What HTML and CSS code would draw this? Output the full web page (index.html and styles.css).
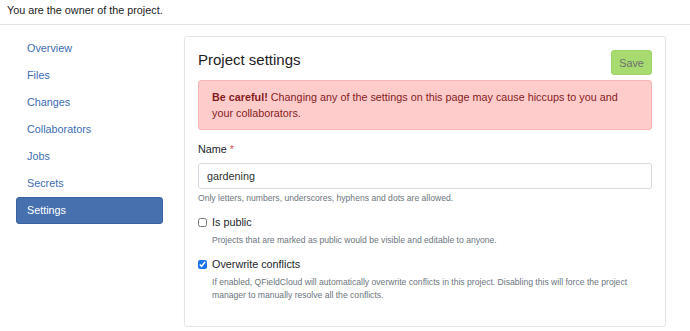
FILE: index.html
```html
<!DOCTYPE html>
<html lang="en">
<head>
    <meta charset="UTF-8">
    <meta name="viewport" content="width=device-width, initial-scale=1.0">
    <title>Project settings</title>
    <link rel="stylesheet" href="styles.css">
</head>
<body>

    <p class="owner-note">You are the owner of the project.</p>

    <div class="layout">
        <!-- Project sections -->
        <nav class="side-nav">
            <a class="nav-link" href="#">Overview</a>
            <a class="nav-link" href="#">Files</a>
            <a class="nav-link" href="#">Changes</a>
            <a class="nav-link" href="#">Collaborators</a>
            <a class="nav-link" href="#">Jobs</a>
            <a class="nav-link" href="#">Secrets</a>
            <a class="nav-link active" href="#">Settings</a>
        </nav>

        <main class="card">
            <div class="card-head">
                <h1>Project settings</h1>
                <button class="btn-save" disabled>Save</button>
            </div>

            <div class="alert">
                <strong>Be careful!</strong> Changing any of the settings on this page may cause hiccups to you and your collaborators.
            </div>

            <div class="field">
                <label class="field-label" for="name">Name <span class="required">*</span></label>
                <input class="text-input" id="name" type="text" value="gardening">
                <div class="help">Only letters, numbers, underscores, hyphens and dots are allowed.</div>
            </div>

            <div class="check">
                <label class="check-row"><input type="checkbox"> Is public</label>
                <div class="help check-help">Projects that are marked as public would be visible and editable to anyone.</div>
            </div>

            <div class="check">
                <label class="check-row"><input type="checkbox" checked> Overwrite conflicts</label>
                <div class="help check-help">If enabled, QFieldCloud will automatically overwrite conflicts in this project. Disabling this will force the project manager to manually resolve all the conflicts.</div>
            </div>
        </main>
    </div>

</body>
</html>
```

FILE: styles.css
```css
body {
    margin: 0;
    font-family: "Liberation Sans", Arial, sans-serif;
    font-size: 10.8px;
    color: #212529;
    background-color: #fff;
}

.owner-note {
    margin: 0;
    padding: 0 7px;
    height: 24px;
    line-height: 20px;
    color: #222;
    border-bottom: 1px solid #e3e3e3;
}

.layout {
    display: flex;
    align-items: flex-start;
    gap: 21px;
    padding: 10px 24px 0 16px;
}

.side-nav {
    display: flex;
    flex-direction: column;
    width: 147px;
    flex-shrink: 0;
}

.nav-link {
    display: block;
    height: 27px;
    line-height: 27px;
    padding: 0 11px;
    color: #3d6db3;
    text-decoration: none;
    border-radius: 3px;
    box-sizing: border-box;
}

.nav-link.active {
    background-color: #4670ae;
    border: 1px solid #3a62a0;
    line-height: 25px;
    padding: 0 10px;
    color: #fff;
}

.card {
    flex: 1;
    margin-top: 1px;
    padding: 13px 13px 24px;
    border: 1px solid #e4e4e4;
    border-radius: 3px;
    box-shadow: 0 1px 2px rgba(0, 0, 0, 0.04);
}

.card-head {
    display: flex;
    justify-content: space-between;
    align-items: flex-start;
    height: 25px;
}

.card-head h1 {
    margin: 0;
    font-size: 15px;
    font-weight: normal;
    line-height: 20px;
    color: #222;
}

.btn-save {
    width: 41px;
    height: 25px;
    padding: 0;
    font-family: inherit;
    font-size: 10.8px;
    color: #6f6f6f;
    background-color: #a7db70;
    border: 1px solid #9fd468;
    border-radius: 3px;
}

.alert {
    margin-top: 5px;
    padding: 8px 20px 8px 13px;
    line-height: 16px;
    color: #851c1c;
    background-color: #ffcccc;
    border: 1px solid #f6b4b4;
    border-radius: 3px;
}

.field {
    margin-top: 11px;
}

.field-label {
    display: block;
    line-height: 16px;
    margin-bottom: 6px;
}

.required {
    color: #d9534f;
}

.text-input {
    display: block;
    width: 100%;
    height: 26px;
    box-sizing: border-box;
    padding: 0 8px;
    font-family: inherit;
    font-size: 10.8px;
    color: #333;
    border: 1px solid #d6dce2;
    border-radius: 3px;
}

.help {
    margin-top: 3px;
    font-size: 8.6px;
    line-height: 13px;
    color: #6c757d;
}

.check {
    margin-top: 9px;
}

.check-row {
    display: flex;
    align-items: center;
    gap: 5px;
    line-height: 16px;
}

.check-row input {
    width: 9px;
    height: 9px;
    margin: 0;
    accent-color: #1a73e8;
}

.check-help {
    margin-top: 4px;
    margin-left: 14px;
}
```
